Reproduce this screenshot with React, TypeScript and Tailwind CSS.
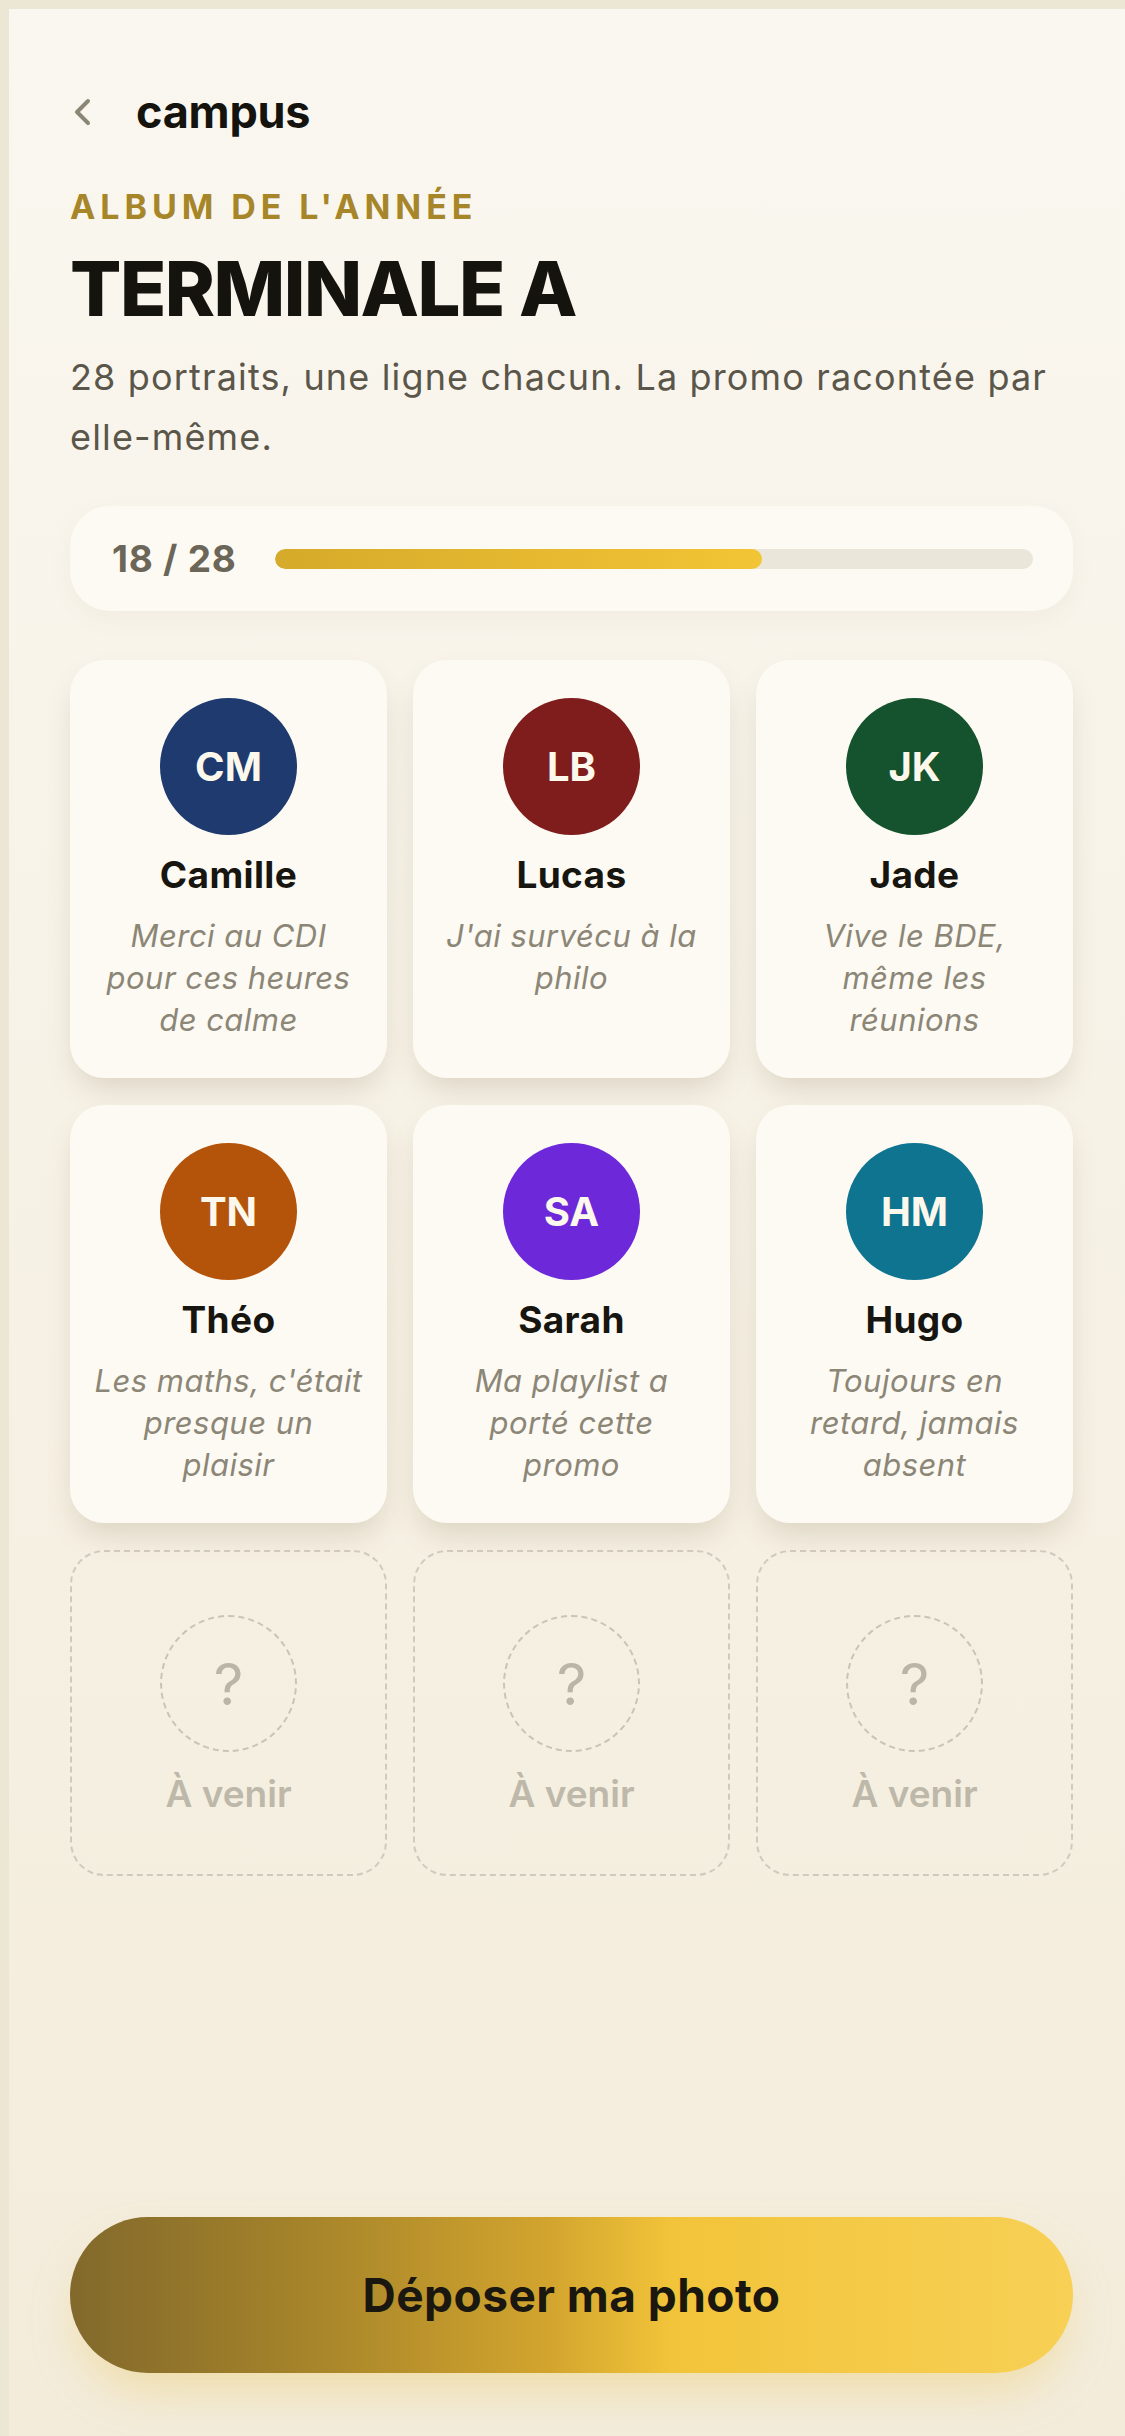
import React from 'react';

interface Portrait {
  initials: string;
  name: string;
  quote: string[];
  color: string;
}

// lines are split the way the album shows them
const portraits: Portrait[] = [
  { initials: 'CM', name: 'Camille', quote: ['Merci au CDI', 'pour ces heures', 'de calme'], color: 'bg-[#1e3a6e]' },
  { initials: 'LB', name: 'Lucas', quote: ["J'ai survécu à la", 'philo'], color: 'bg-[#7f1d1d]' },
  { initials: 'JK', name: 'Jade', quote: ['Vive le BDE,', 'même les', 'réunions'], color: 'bg-[#14532d]' },
  { initials: 'TN', name: 'Théo', quote: ["Les maths, c'était", 'presque un', 'plaisir'], color: 'bg-[#b4540b]' },
  { initials: 'SA', name: 'Sarah', quote: ['Ma playlist a', 'porté cette', 'promo'], color: 'bg-[#6d28d9]' },
  { initials: 'HM', name: 'Hugo', quote: ['Toujours en', 'retard, jamais', 'absent'], color: 'bg-[#0e7490]' },
];

const done = 18;
const total = 28;

function PortraitCard({ p }: { p: Portrait }) {
  return (
    <div className="flex flex-col items-center rounded-[34px] bg-[#fcfaf3] px-[16px] pt-[38px] pb-[37px] shadow-[0_16px_30px_-6px_rgba(110,95,60,0.2)]">
      <div className={`flex h-[137px] w-[137px] items-center justify-center rounded-full ${p.color}`}>
        <span className="text-[40px] font-bold leading-none text-[#fdf8ec]">{p.initials}</span>
      </div>
      <div className="mt-[18px] text-[37px] font-bold leading-[44px] tracking-[0.01em] text-[#17150f]">{p.name}</div>
      <p className="mt-[18px] whitespace-nowrap text-center text-[31px] italic leading-[42px] tracking-[0.015em] text-[#8c8677]">
        {p.quote.map((line, i) => (
          <span key={i} className="block">
            {line}
          </span>
        ))}
      </p>
    </div>
  );
}

function PendingCard() {
  return (
    <div className="flex flex-col items-center rounded-[34px] border-2 border-dashed border-[#cfcabd] pt-[63px] pb-[58px]">
      <div className="flex h-[137px] w-[137px] items-center justify-center rounded-full border-2 border-dashed border-[#c9c4b6]">
        <span className="text-[58px] leading-none text-[#bab5a7]">?</span>
      </div>
      <div className="mt-[20px] text-[37px] font-semibold leading-[44px] text-[#bdb8a9]">À venir</div>
    </div>
  );
}

export default function App() {
  const pct = (done / total) * 100;

  return (
    <div className="overflow-hidden bg-[#ece6d4] pt-[9px] pl-[9px] font-['Inter',sans-serif]">
      <div className="flex min-h-[2427px] w-[1125px] flex-col bg-gradient-to-b from-[#faf7f0] to-[#f3ecdb] px-[61px] pt-[75px] pb-[63px]">
        {/* Header */}
        <div className="flex h-[56px] items-center">
          <svg width="24" height="30" viewBox="0 0 24 30" className="text-[#8b8676]">
            <path d="M18 4 L7 15 L18 26" fill="none" stroke="currentColor" strokeWidth="4" strokeLinecap="round" strokeLinejoin="round" />
          </svg>
          <span className="ml-[42px] text-[45px] font-bold leading-[56px] tracking-[-0.005em] text-[#15130e]">campus</span>
        </div>

        <div className="mt-[47px] text-[34px] font-bold leading-[40px] tracking-[0.145em] text-[#a7862a]">ALBUM DE L'ANNÉE</div>
        <h1 className="mt-[23px] text-[76px] font-extrabold leading-[76px] tracking-[-0.02em] text-[#15130e]">TERMINALE A</h1>
        <p className="mt-[21px] text-[36px] leading-[60px] tracking-[0.032em] text-[#5b564a]">
          28 portraits, une ligne chacun. La promo racontée par elle-même.
        </p>

        {/* Progress */}
        <div className="mt-[39px] flex h-[105px] items-center rounded-[40px] bg-[#fcfaf3] pl-[42px] pr-[40px] shadow-[0_8px_24px_rgba(120,100,60,0.05)]">
          <span className="text-[37px] font-bold tracking-[0.02em] text-[#6b6657]">
            {done} / {total}
          </span>
          <div className="ml-[38px] h-[20px] flex-1 overflow-hidden rounded-full bg-[#ebe6da]">
            <div
              className="h-full rounded-full bg-gradient-to-r from-[#d6aa2a] to-[#f2c535]"
              style={{ width: `${pct}%` }}
            />
          </div>
        </div>

        {/* Grid */}
        <div className="mt-[49px] grid grid-cols-3 gap-x-[26px] gap-y-[27px]">
          {portraits.map((p) => (
            <PortraitCard key={p.initials} p={p} />
          ))}
          <PendingCard />
          <PendingCard />
          <PendingCard />
        </div>

        {/* CTA */}
        <button className="mt-auto flex h-[156px] w-full items-center justify-center rounded-full bg-[linear-gradient(90deg,#82692c_0%,#a3822a_22%,#d3a52e_48%,#f2c43a_60%,#f7d055_100%)] shadow-[0_24px_48px_-10px_rgba(232,190,60,0.35)]">
          <span className="text-[46px] font-bold tracking-[0.01em] text-[#1a1710]">Déposer ma photo</span>
        </button>
      </div>
    </div>
  );
}
